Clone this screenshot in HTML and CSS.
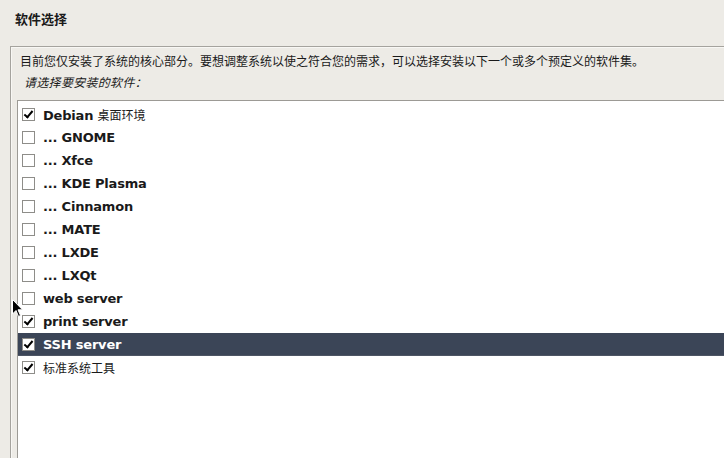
FILE: index.html
```html
<!DOCTYPE html>
<html lang="zh">
<head>
<meta charset="utf-8">
<link rel="stylesheet" href="styles.css">
</head>
<body>
<div class="title">软件选择</div>
<div class="frame">
  <div class="desc">目前您仅安装了系统的核心部分。要想调整系统以使之符合您的需求，可以选择安装以下一个或多个预定义的软件集。</div>
  <div class="prompt">请选择要安装的软件：</div>
  <div class="list">
    <div class="row"><span class="cb on"></span><span class="lbl">Debian <span class="cjk">桌面环境</span></span></div>
    <div class="row"><span class="cb"></span><span class="lbl">... GNOME</span></div>
    <div class="row"><span class="cb"></span><span class="lbl">... Xfce</span></div>
    <div class="row"><span class="cb"></span><span class="lbl">... KDE Plasma</span></div>
    <div class="row"><span class="cb"></span><span class="lbl">... Cinnamon</span></div>
    <div class="row"><span class="cb"></span><span class="lbl">... MATE</span></div>
    <div class="row"><span class="cb"></span><span class="lbl">... LXDE</span></div>
    <div class="row"><span class="cb"></span><span class="lbl">... LXQt</span></div>
    <div class="row"><span class="cb"></span><span class="lbl">web server</span></div>
    <div class="row"><span class="cb on"></span><span class="lbl">print server</span></div>
    <div class="row sel"><span class="cb on"></span><span class="lbl">SSH server</span></div>
    <div class="row"><span class="cb on"></span><span class="lbl cjk">标准系统工具</span></div>
  </div>
</div>
<svg class="cursor" width="12" height="19" viewBox="0 0 12 19"><path d="M0.5 0.5 L0.5 15 L4 11.5 L6.5 17.5 L8.5 16.5 L6 10.8 L10.5 10.8 Z" fill="#000" stroke="#fff" stroke-width="1"/></svg>
</body>
</html>
```
FILE: styles.css
```css
html, body {
  margin: 0;
  padding: 0;
  height: 100%;
  overflow: hidden;
}
body {
  background: #edebe6;
  font-family: "DejaVu Sans", "Noto Sans CJK SC", sans-serif;
  color: #1a1a1a;
  display: flex;
  flex-direction: column;
  position: relative;
}
.title {
  font-weight: bold;
  font-size: 13px;
  line-height: 16px;
  padding: 11px 0 0 15px;
  height: 19px;
  font-family: "Noto Sans CJK SC", sans-serif;
}
.frame {
  margin: 16px 0 0 10px;
  border-top: 1px solid #a5a39e;
  border-left: 1px solid #a5a39e;
  box-shadow: inset 1px 1px 0 #f8f7f4;
  flex: 1;
  display: flex;
  flex-direction: column;
  padding-left: 6px;
}
.desc {
  font-family: "Noto Sans CJK SC", sans-serif;
  font-size: 12px;
  line-height: 16px;
  padding: 6px 0 0 3px;
  white-space: nowrap;
}
.prompt {
  font-family: "Noto Sans CJK SC", sans-serif;
  font-size: 12px;
  font-style: italic;
  line-height: 16px;
  padding: 5px 0 0 7px;
  letter-spacing: 0.3px;
}
.list {
  margin-top: 10px;
  flex: 1;
  background: #fff;
  border-top: 1px solid #9c9a95;
  border-left: 1px solid #9c9a95;
  padding-top: 2px;
}
.row {
  height: 23px;
  display: flex;
  align-items: center;
  padding-left: 4px;
  gap: 8px;
  font-weight: bold;
  font-size: 13px;
  color: #1a1a1a;
}
.row.sel {
  background: #3b4557;
  box-shadow: inset 0 -1px 0 #4d5564;
  color: #fff;
}
.cb {
  width: 11px;
  height: 11px;
  border: 1px solid #8e8d89;
  background: #fff;
  position: relative;
  flex: none;
}
.cb.on::after {
  content: "";
  position: absolute;
  left: 3px;
  top: 0px;
  width: 3px;
  height: 7px;
  border: solid #000;
  border-width: 0 2px 2px 0;
  transform: rotate(40deg);
}
.lbl {
  white-space: nowrap;
  letter-spacing: -0.2px;
}
.cjk {
  font-family: "Noto Sans CJK SC", sans-serif;
  font-weight: normal;
  font-size: 12px;
  letter-spacing: 0;
}
.cursor {
  position: absolute;
  left: 12px;
  top: 299px;
}
```
